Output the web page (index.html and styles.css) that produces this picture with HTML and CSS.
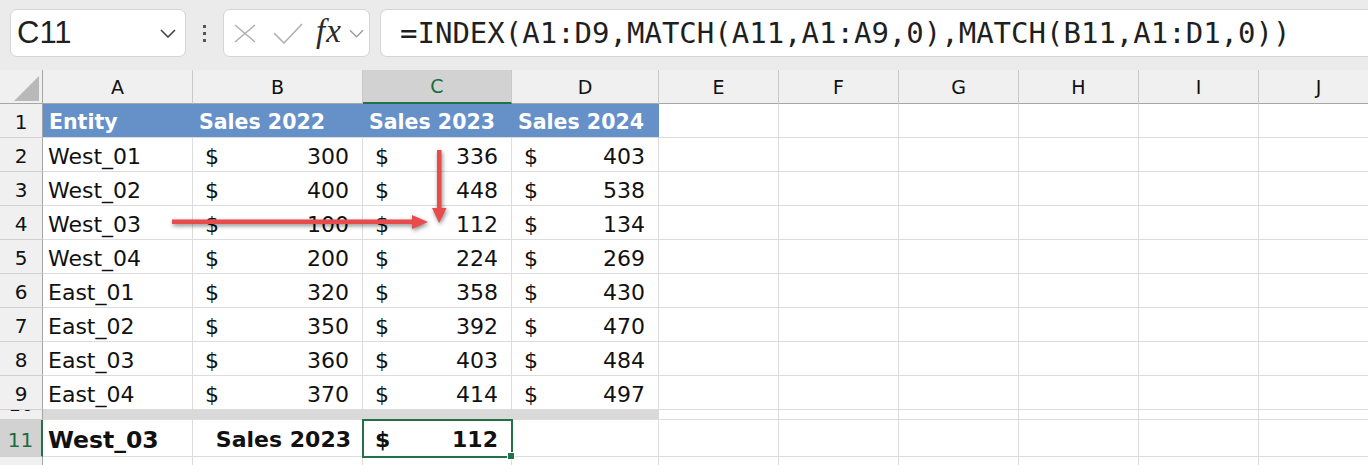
FILE: index.html
```html
<!DOCTYPE html>
<html lang="en">

<head>
    <meta charset="UTF-8">
    <meta name="viewport" content="width=device-width, initial-scale=1.0">
    <title>INDEX MATCH lookup</title>
    <link rel="stylesheet" href="styles.css">
</head>

<body>
    <div class="toolbar">
        <div class="namebox">
            <span class="cellref">C11</span>
            <svg class="chev" viewBox="0 0 16 9"><path d="M1 1l7 7 7-7" /></svg>
        </div>
        <div class="dots"><span></span><span></span><span></span></div>
        <div class="fxbox">
            <svg class="cancel" viewBox="0 0 22 19"><path d="M1 1l20 17M21 1L1 18" /></svg>
            <svg class="enter" viewBox="0 0 30 21"><path d="M1 10l10 10L29 1" /></svg>
            <span class="fx">fx</span>
            <svg class="chev small" viewBox="0 0 16 9"><path d="M1 1l7 7 7-7" /></svg>
        </div>
        <div class="formula">=INDEX(A1:D9,MATCH(A11,A1:A9,0),MATCH(B11,A1:D1,0))</div>
    </div>

    <div class="sheetwrap">
        <div class="sheet">
            <!-- column headers -->
            <div class="corner"><div class="tri"></div></div>
            <div class="colhead">A</div>
            <div class="colhead">B</div>
            <div class="colhead active">C</div>
            <div class="colhead">D</div>
            <div class="colhead">E</div>
            <div class="colhead">F</div>
            <div class="colhead">G</div>
            <div class="colhead">H</div>
            <div class="colhead">I</div>
            <div class="colhead">J</div>

            <!-- row 1 -->
            <div class="rowhead">1</div>
            <div class="cell th">Entity</div>
            <div class="cell th">Sales 2022</div>
            <div class="cell th">Sales 2023</div>
            <div class="cell th">Sales 2024</div>
            <div class="cell"></div><div class="cell"></div><div class="cell"></div>
            <div class="cell"></div><div class="cell"></div><div class="cell"></div>

            <!-- row 2 -->
            <div class="rowhead">2</div>
            <div class="cell">West_01</div>
            <div class="cell acc"><span>$</span><span>300</span></div>
            <div class="cell acc"><span>$</span><span>336</span></div>
            <div class="cell acc"><span>$</span><span>403</span></div>
            <div class="cell"></div><div class="cell"></div><div class="cell"></div>
            <div class="cell"></div><div class="cell"></div><div class="cell"></div>

            <!-- row 3 -->
            <div class="rowhead">3</div>
            <div class="cell">West_02</div>
            <div class="cell acc"><span>$</span><span>400</span></div>
            <div class="cell acc"><span>$</span><span>448</span></div>
            <div class="cell acc"><span>$</span><span>538</span></div>
            <div class="cell"></div><div class="cell"></div><div class="cell"></div>
            <div class="cell"></div><div class="cell"></div><div class="cell"></div>

            <!-- row 4 -->
            <div class="rowhead">4</div>
            <div class="cell">West_03</div>
            <div class="cell acc"><span>$</span><span>100</span></div>
            <div class="cell acc"><span>$</span><span>112</span></div>
            <div class="cell acc"><span>$</span><span>134</span></div>
            <div class="cell"></div><div class="cell"></div><div class="cell"></div>
            <div class="cell"></div><div class="cell"></div><div class="cell"></div>

            <!-- row 5 -->
            <div class="rowhead">5</div>
            <div class="cell">West_04</div>
            <div class="cell acc"><span>$</span><span>200</span></div>
            <div class="cell acc"><span>$</span><span>224</span></div>
            <div class="cell acc"><span>$</span><span>269</span></div>
            <div class="cell"></div><div class="cell"></div><div class="cell"></div>
            <div class="cell"></div><div class="cell"></div><div class="cell"></div>

            <!-- row 6 -->
            <div class="rowhead">6</div>
            <div class="cell">East_01</div>
            <div class="cell acc"><span>$</span><span>320</span></div>
            <div class="cell acc"><span>$</span><span>358</span></div>
            <div class="cell acc"><span>$</span><span>430</span></div>
            <div class="cell"></div><div class="cell"></div><div class="cell"></div>
            <div class="cell"></div><div class="cell"></div><div class="cell"></div>

            <!-- row 7 -->
            <div class="rowhead">7</div>
            <div class="cell">East_02</div>
            <div class="cell acc"><span>$</span><span>350</span></div>
            <div class="cell acc"><span>$</span><span>392</span></div>
            <div class="cell acc"><span>$</span><span>470</span></div>
            <div class="cell"></div><div class="cell"></div><div class="cell"></div>
            <div class="cell"></div><div class="cell"></div><div class="cell"></div>

            <!-- row 8 -->
            <div class="rowhead">8</div>
            <div class="cell">East_03</div>
            <div class="cell acc"><span>$</span><span>360</span></div>
            <div class="cell acc"><span>$</span><span>403</span></div>
            <div class="cell acc"><span>$</span><span>484</span></div>
            <div class="cell"></div><div class="cell"></div><div class="cell"></div>
            <div class="cell"></div><div class="cell"></div><div class="cell"></div>

            <!-- row 9 -->
            <div class="rowhead">9</div>
            <div class="cell">East_04</div>
            <div class="cell acc"><span>$</span><span>370</span></div>
            <div class="cell acc"><span>$</span><span>414</span></div>
            <div class="cell acc"><span>$</span><span>497</span></div>
            <div class="cell"></div><div class="cell"></div><div class="cell"></div>
            <div class="cell"></div><div class="cell"></div><div class="cell"></div>

            <!-- row 10: spacer -->
            <div class="rowhead short"><span>10</span></div>
            <div class="cell band"></div>
            <div class="cell band"></div>
            <div class="cell band"></div>
            <div class="cell band"></div>
            <div class="cell"></div><div class="cell"></div><div class="cell"></div>
            <div class="cell"></div><div class="cell"></div><div class="cell"></div>

            <!-- row 11: lookup -->
            <div class="rowhead active">11</div>
            <div class="cell bold key">West_03</div>
            <div class="cell bold right">Sales 2023</div>
            <div class="cell acc bold selected"><span>$</span><span>112</span></div>
            <div class="cell"></div>
            <div class="cell"></div><div class="cell"></div><div class="cell"></div>
            <div class="cell"></div><div class="cell"></div><div class="cell"></div>

            <!-- row 12 (only its top edge is in view) -->
            <div class="rowhead"></div>
            <div class="cell"></div><div class="cell"></div><div class="cell"></div>
            <div class="cell"></div><div class="cell"></div><div class="cell"></div>
            <div class="cell"></div><div class="cell"></div><div class="cell"></div>
            <div class="cell"></div>
        </div>

        <!-- lookup arrows -->
        <svg class="arrows" width="700" height="200" viewBox="0 0 700 200">
            <rect x="172" y="149.5" width="242" height="4.5" />
            <polygon points="412,145 428,152 412,159" />
            <rect x="437" y="80" width="4.5" height="60" />
            <polygon points="432,138 446.5,138 439.2,153" />
        </svg>
    </div>
</body>

</html>
```

FILE: styles.css
```css
body {
    margin: 0;
    background-color: white;
    font-family: "DejaVu Sans", sans-serif;
    color: #111;
    overflow: hidden;
    width: 1368px;
    height: 465px;
}

/* formula bar */
.toolbar {
    height: 70px;
    box-sizing: border-box;
    padding: 9px 0 0 10px;
    background-color: #ebebeb;
    display: flex;
    align-items: flex-start;
}

.namebox,
.fxbox,
.formula {
    height: 48px;
    box-sizing: border-box;
    background-color: white;
    border: 1px solid #d5d5d5;
    border-radius: 7px;
}

.namebox {
    width: 176px;
    display: flex;
    align-items: center;
    justify-content: space-between;
    padding: 0 9px 0 6px;
}

.cellref {
    font-family: "Liberation Sans", sans-serif;
    font-size: 31px;
    color: #1f1f1f;
}

.chev {
    width: 16px;
    height: 9px;
    fill: none;
    stroke: #444;
    stroke-width: 1.6;
}

.chev.small {
    width: 15px;
    stroke: #9a9a9a;
    stroke-width: 1.4;
}

.dots {
    width: 37px;
    height: 48px;
    display: flex;
    flex-direction: column;
    align-items: center;
    justify-content: center;
    gap: 4px;
}

.dots span {
    width: 3px;
    height: 3px;
    background-color: #555;
}

.fxbox {
    width: 147px;
    display: flex;
    align-items: center;
    padding-left: 10px;
}

.cancel {
    width: 22px;
    height: 19px;
    fill: none;
    stroke: #b0b0b0;
    stroke-width: 1.6;
    margin-right: 17px;
}

.enter {
    width: 30px;
    height: 21px;
    fill: none;
    stroke: #b0b0b0;
    stroke-width: 1.6;
    margin-right: 13px;
}

.fx {
    font-family: "Liberation Serif", serif;
    font-style: italic;
    font-size: 33px;
    letter-spacing: 1px;
    color: #2a2a2a;
    margin-right: 7px;
    margin-top: -4px;
}

.formula {
    flex: 1;
    margin-left: 10px;
    margin-right: -20px;
    border-right: none;
    padding-left: 19px;
    font-family: "DejaVu Sans Mono", monospace;
    font-size: 29px;
    line-height: 46px;
    color: #1f1f1f;
    white-space: nowrap;
}

/* worksheet */
.sheetwrap {
    position: relative;
}

.sheet {
    display: grid;
    grid-template-columns: 43px 150px 170px 149px 147px repeat(6, 120px);
    grid-template-rows: 34px repeat(9, 34px) 10px 37px 34px;
}

.corner {
    background-color: #f0f0f0;
    border-right: 1px solid #a6a6a6;
    border-bottom: 1px solid #a6a6a6;
    display: flex;
    align-items: flex-end;
    justify-content: flex-end;
    padding: 0 3px 2px 0;
}

.tri {
    width: 0;
    height: 0;
    border-left: 25px solid transparent;
    border-bottom: 25px solid #b9b9b9;
}

.colhead {
    background-color: #f0f0f0;
    border-right: 1px solid #c8c8c8;
    border-bottom: 1px solid #a6a6a6;
    display: grid;
    place-items: center;
    font-size: 19px;
    color: #111;
}

.colhead.active {
    background-color: #d2d2d2;
    color: #1d6b41;
    border-bottom: 2px solid #217346;
}

.rowhead {
    background-color: #f0f0f0;
    border-right: 1px solid #a6a6a6;
    border-bottom: 1px solid #d0d0d0;
    display: grid;
    place-items: center;
    padding-top: 3px;
    font-size: 20px;
    color: #111;
    overflow: hidden;
}

.rowhead.short {
    place-items: start center;
    padding-top: 0;
}

.rowhead.short span {
    line-height: 20px;
    margin-top: -16px;
}

.rowhead.active {
    background-color: #d2d2d2;
    color: #1d6b41;
    border-right: 2px solid #217346;
}

.cell {
    border-right: 1px solid #dcdcdc;
    border-bottom: 1px solid #dcdcdc;
    display: flex;
    align-items: center;
    padding: 3px 5px 0;
    font-size: 22px;
    white-space: nowrap;
    overflow: hidden;
}

.th {
    background-color: #6690c8;
    color: white;
    font-weight: 700;
    font-size: 20.5px;
    border-right: none;
    padding-left: 6px;
}

.acc {
    justify-content: space-between;
    padding: 3px 13px 0 12px;
}

.band {
    background-color: #d9d9d9;
    border-right: none;
}

.bold {
    font-weight: 700;
    font-size: 22px;
}

.bold.key {
    font-size: 23.5px;
}

.right {
    justify-content: flex-end;
    padding-right: 11px;
}

.selected {
    position: relative;
    outline: 2px solid #217346;
    outline-offset: -1px;
    overflow: visible;
}

.selected::after {
    content: "";
    position: absolute;
    right: -4px;
    bottom: -4px;
    width: 6px;
    height: 6px;
    background-color: #217346;
    border: 1px solid white;
}

.arrows {
    position: absolute;
    top: 0;
    left: 0;
    fill: #e84b4b;
    filter: drop-shadow(1px 2px 2px rgba(0, 0, 0, 0.45));
}
```
